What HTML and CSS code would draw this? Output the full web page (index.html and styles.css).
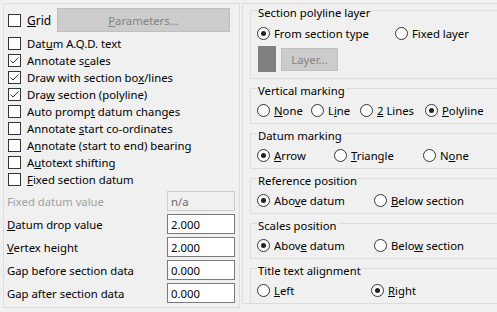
FILE: index.html
```html
<!DOCTYPE html>
<html>
<head>
    <title>Section Options</title>
    <link rel="stylesheet" href="styles.css">
</head>
<body>
    <div class="dialog">
        <div class="panel left">
            <div class="top-row">
                <label class="check grid-check"><span class="box"></span><span><u>G</u>rid</span></label>
                <button class="btn params"><u>P</u>arameters...</button>
            </div>

            <div class="checks">
                <label class="check"><span class="box"></span><span>Dat<u>u</u>m A.Q.D. text</span></label>
                <label class="check"><span class="box on"><svg viewBox="0 0 11 11"><polyline points="1.5,5.5 4,8 9.5,2.5"/></svg></span><span>Annotate s<u>c</u>ales</span></label>
                <label class="check"><span class="box on"><svg viewBox="0 0 11 11"><polyline points="1.5,5.5 4,8 9.5,2.5"/></svg></span><span>Draw with section bo<u>x</u>/lines</span></label>
                <label class="check"><span class="box on"><svg viewBox="0 0 11 11"><polyline points="1.5,5.5 4,8 9.5,2.5"/></svg></span><span>Dra<u>w</u> section (polyline)</span></label>
                <label class="check"><span class="box"></span><span>Auto promp<u>t</u> datum changes</span></label>
                <label class="check"><span class="box"></span><span>Annotate <u>s</u>tart co-ordinates</span></label>
                <label class="check"><span class="box"></span><span>A<u>n</u>notate (start to end) bearing</span></label>
                <label class="check"><span class="box"></span><span>A<u>u</u>totext shifting</span></label>
                <label class="check"><span class="box"></span><span><u>F</u>ixed section datum</span></label>
            </div>

            <div class="fields">
                <div class="field disabled"><span class="field-label">Fixed datum value</span><input class="edit" type="text" value="n/a" disabled></div>
                <div class="field"><span class="field-label"><u>D</u>atum drop value</span><input class="edit" type="text" value="2.000"></div>
                <div class="field"><span class="field-label"><u>V</u>ertex height</span><input class="edit" type="text" value="2.000"></div>
                <div class="field"><span class="field-label">Gap before section data</span><input class="edit" type="text" value="0.000"></div>
                <div class="field"><span class="field-label">Gap after section data</span><input class="edit" type="text" value="0.000"></div>
            </div>
        </div>

        <div class="panel right">
            <div class="group big">
                <div class="group-title">Section polyline layer</div>
                <div class="radios">
                    <label class="radio w138"><span class="dot on"></span><span>From section type</span></label>
                    <label class="radio"><span class="dot"></span><span>Fixed layer</span></label>
                </div>
                <div class="layer-row">
                    <span class="swatch"></span>
                    <button class="btn layer-btn">Layer...</button>
                </div>
            </div>

            <div class="group">
                <div class="group-title">Vertical marking</div>
                <div class="radios">
                    <label class="radio w54"><span class="dot"></span><span><u>N</u>one</span></label>
                    <label class="radio w49"><span class="dot"></span><span>L<u>i</u>ne</span></label>
                    <label class="radio w65"><span class="dot"></span><span><u>2</u> Lines</span></label>
                    <label class="radio"><span class="dot on"></span><span><u>P</u>olyline</span></label>
                </div>
            </div>

            <div class="group">
                <div class="group-title">Datum marking</div>
                <div class="radios">
                    <label class="radio w77"><span class="dot on"></span><span><u>A</u>rrow</span></label>
                    <label class="radio w89"><span class="dot"></span><span><u>T</u>riangle</span></label>
                    <label class="radio"><span class="dot"></span><span>N<u>o</u>ne</span></label>
                </div>
            </div>

            <div class="group">
                <div class="group-title">Reference position</div>
                <div class="radios">
                    <label class="radio w117"><span class="dot on"></span><span>Abo<u>v</u>e datum</span></label>
                    <label class="radio"><span class="dot"></span><span><u>B</u>elow section</span></label>
                </div>
            </div>

            <div class="group">
                <div class="group-title">Scales position</div>
                <div class="radios">
                    <label class="radio w117"><span class="dot on"></span><span>Abov<u>e</u> datum</span></label>
                    <label class="radio"><span class="dot"></span><span>Belo<u>w</u> section</span></label>
                </div>
            </div>

            <div class="group">
                <div class="group-title">Title text alignment</div>
                <div class="radios">
                    <label class="radio w114"><span class="dot"></span><span><u>L</u>eft</span></label>
                    <label class="radio"><span class="dot on"></span><span><u>R</u>ight</span></label>
                </div>
            </div>
        </div>
    </div>
</body>
</html>
```

FILE: styles.css
```css
body {
    margin: 0;
    padding: 0;
    width: 497px;
    height: 312px;
    overflow: hidden;
    background: #f0f0f0;
    font-family: "Noto Sans", "Open Sans", sans-serif;
    font-size: 11.3px;
    color: #000000;
}

u {
    text-decoration: underline;
    text-underline-offset: 1px;
}

.dialog {
    display: flex;
    box-sizing: border-box;
    width: 497px;
    padding: 3px 0 0 3px;
}

.panel {
    box-sizing: border-box;
    border: 1px solid #dcdcdc;
}

.left {
    width: 237px;
    height: 305px;
    padding-left: 3px;
}

.right {
    flex: 1;
    height: 301px;
    margin-left: 2px;
    border-right: none;
    padding: 6px 0 0 7px;
}

/* left column */

.top-row {
    display: flex;
    align-items: center;
    height: 24px;
    margin-top: 4px;
}

.grid-check {
    width: 49px;
    padding-left: 1px;
    font-size: 12px;
}

.check {
    display: flex;
    align-items: center;
    height: 17px;
    white-space: nowrap;
}

.box {
    box-sizing: border-box;
    width: 13px;
    height: 13px;
    margin-right: 6px;
    border: 1px solid #333333;
    background: #ffffff;
    flex: none;
    display: flex;
}

.box svg {
    width: 11px;
    height: 11px;
}

.box polyline {
    fill: none;
    stroke: #333333;
    stroke-width: 1;
}

.checks {
    margin-top: 3px;
    padding-left: 1px;
}

.btn {
    box-sizing: border-box;
    border: 1px solid #bfbfbf;
    background: #cccccc;
    color: #838383;
    font-family: inherit;
    font-size: 11.3px;
    padding: 0;
}

.params {
    width: 173px;
    height: 24px;
}

.fields {
    margin-top: 3px;
}

.field {
    display: flex;
    align-items: center;
    height: 20px;
    margin-bottom: 3px;
}

.field-label {
    width: 160px;
    white-space: nowrap;
}

.edit {
    box-sizing: border-box;
    width: 68px;
    height: 20px;
    border: 1px solid #7a7a7a;
    background: #ffffff;
    font-family: inherit;
    font-size: 11.3px;
    color: #000000;
    padding: 0 3px;
    margin: 0;
}

.disabled .field-label {
    color: #a0a0a0;
}

.disabled .edit {
    border-color: #cccccc;
    background: #f0f0f0;
    color: #6d6d6d;
}

/* right column */

.group {
    box-sizing: border-box;
    height: 36px;
    margin-top: 9px;
    border: 1px solid #dcdcdc;
    border-right: none;
    padding-left: 6px;
}

.group.big {
    height: 69px;
    margin-top: 0;
}

.group-title {
    width: fit-content;
    height: 14px;
    line-height: 14px;
    margin-top: -5px;
    padding: 0 1px;
    background: #f0f0f0;
    white-space: nowrap;
}

.radios {
    display: flex;
    height: 17px;
    margin-top: 4px;
}

.big .radios {
    margin-top: 5px;
}

.radio {
    display: flex;
    align-items: center;
    white-space: nowrap;
}

.dot {
    box-sizing: border-box;
    width: 13px;
    height: 13px;
    margin-right: 4px;
    border: 1px solid #333333;
    border-radius: 50%;
    background: #ffffff;
    flex: none;
    display: flex;
    align-items: center;
    justify-content: center;
}

.dot.on::after {
    content: "";
    width: 5px;
    height: 5px;
    border-radius: 50%;
    background: #222222;
}

.w138 { width: 138px; }
.w54 { width: 54px; }
.w49 { width: 49px; }
.w65 { width: 65px; }
.w77 { width: 77px; }
.w89 { width: 89px; }
.w117 { width: 117px; }
.w114 { width: 114px; }

.layer-row {
    display: flex;
    align-items: center;
    height: 26px;
    margin-top: 4px;
    padding-left: 1px;
}

.swatch {
    width: 18px;
    height: 26px;
    background: #808080;
}

.layer-btn {
    width: 57px;
    height: 23px;
    margin-left: 5px;
}
```
